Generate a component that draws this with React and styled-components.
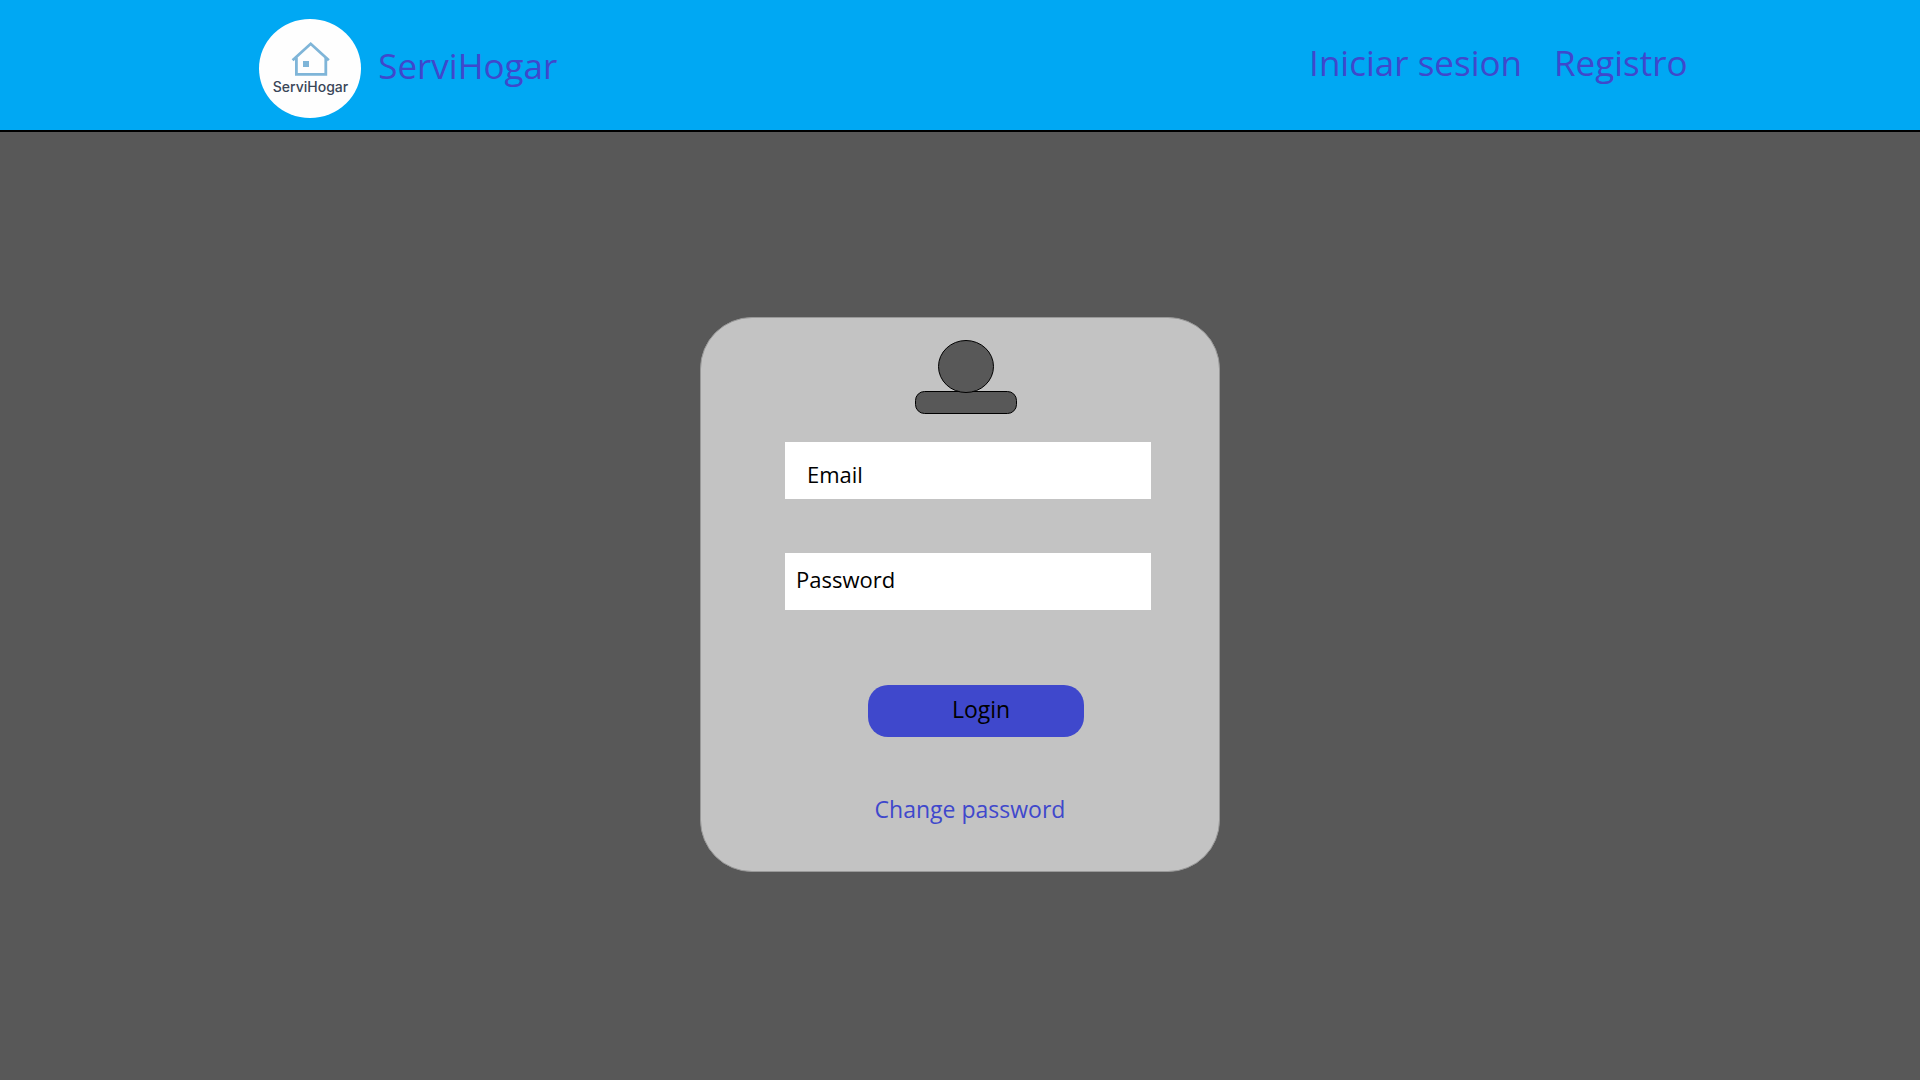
import React from "react";
import styled, { createGlobalStyle } from "styled-components";

const GlobalStyle = createGlobalStyle`
  * { box-sizing: border-box; }
  body {
    margin: 0;
    background: #585858;
    color: #000;
    font-family: "Open Sans", "Noto Sans", sans-serif;
  }
`;

const Header = styled.header`
  display: flex;
  align-items: flex-start;
  justify-content: space-between;
  padding: 19px 12% 12px 13.5%;
  background: #00a8f3;
  border-bottom: 2px solid #000;
`;

const Brand = styled.a`
  display: flex;
  align-items: flex-start;
  gap: 17px;
  color: #3f48cc;
  font-size: 35px;
  line-height: 48px;
  text-decoration: none;
`;

const BrandName = styled.span`
  padding-top: 23px;
`;

const LogoArt = styled.svg`
  display: block;
  width: 102px;
  height: 99px;
`;

const LogoText = styled.text`
  font-family: Inter, "Liberation Sans", sans-serif;
  font-size: 14px;
  font-weight: 500;
  fill: #3a4658;
`;

const Nav = styled.nav`
  display: flex;
  gap: 32px;
  padding: 20px 2px 0 0;
`;

const NavLink = styled.a`
  color: #3f48cc;
  font-size: 35px;
  line-height: 48px;
  text-decoration: none;
`;

const Main = styled.main`
  display: flex;
  justify-content: center;
  padding: 185px 16px 48px;
`;

const Card = styled.form`
  display: flex;
  flex-direction: column;
  align-items: center;
  width: 520px;
  max-width: 100%;
  padding: 22px 68px 46px 84px;
  border: 1px solid #999;
  border-radius: 52px;
  background: #c3c3c3;
`;

const Avatar = styled.svg`
  display: block;
  width: 102px;
  height: 74px;
  margin: 0 4px 28px 0;
`;

const Field = styled.input`
  width: 100%;
  height: 57px;
  margin-bottom: 54px;
  padding: ${(p) => p.$inset};
  border: 0;
  border-radius: 0;
  background: #fff;
  color: #000;
  font: inherit;
  font-size: 22px;

  &::placeholder {
    color: #000;
    opacity: 1;
  }
`;

const LoginButton = styled.button`
  width: 216px;
  height: 52px;
  margin: 21px 0 56px 16px;
  padding: 0 0 4px 10px;
  border: 0;
  border-radius: 20px;
  background: #3f48cc;
  color: #000;
  font: inherit;
  font-size: 23px;
  line-height: 32px;
  cursor: pointer;
`;

const PasswordLink = styled.a`
  margin-left: 4px;
  color: #3f48cc;
  font-size: 23px;
  line-height: 32px;
  text-decoration: none;
`;

function Logo() {
  return (
    <LogoArt viewBox="0 0 102 99" aria-hidden="true">
      <ellipse cx="51" cy="49.5" rx="51" ry="49.5" fill="#fefefe" />
      <g fill="none" stroke="#7fb5d8" strokeWidth="2.8">
        <path d="M33.6 41.2 51.7 24.8 69.8 41.2" />
        <path d="M37.4 38.5V55.4H66.8V38.5" />
      </g>
      <path d="M44 42h6v6h-6z" fill="#7fb5d8" />
      <LogoText x="51.5" y="73" textAnchor="middle">
        ServiHogar
      </LogoText>
    </LogoArt>
  );
}

function UserIcon() {
  return (
    <Avatar viewBox="0 0 102 74" aria-hidden="true">
      <g fill="#585858" stroke="#000">
        <rect x="0.5" y="51.5" width="101" height="22" rx="9" />
        <ellipse cx="51" cy="26.5" rx="27.5" ry="26" />
      </g>
    </Avatar>
  );
}

export default function App() {
  return (
    <>
      <GlobalStyle />
      <Header>
        <Brand href="#">
          <Logo />
          <BrandName>ServiHogar</BrandName>
        </Brand>
        <Nav>
          <NavLink href="#login">Iniciar sesion</NavLink>
          <NavLink href="#registro">Registro</NavLink>
        </Nav>
      </Header>
      <Main>
        <Card onSubmit={(e) => e.preventDefault()}>
          <UserIcon />
          <Field type="email" placeholder="Email" aria-label="Email" $inset="6px 22px 0" />
          <Field type="password" placeholder="Password" aria-label="Password" $inset="0 11px 6px" />
          <LoginButton type="submit">Login</LoginButton>
          <PasswordLink href="#password">Change password</PasswordLink>
        </Card>
      </Main>
    </>
  );
}
